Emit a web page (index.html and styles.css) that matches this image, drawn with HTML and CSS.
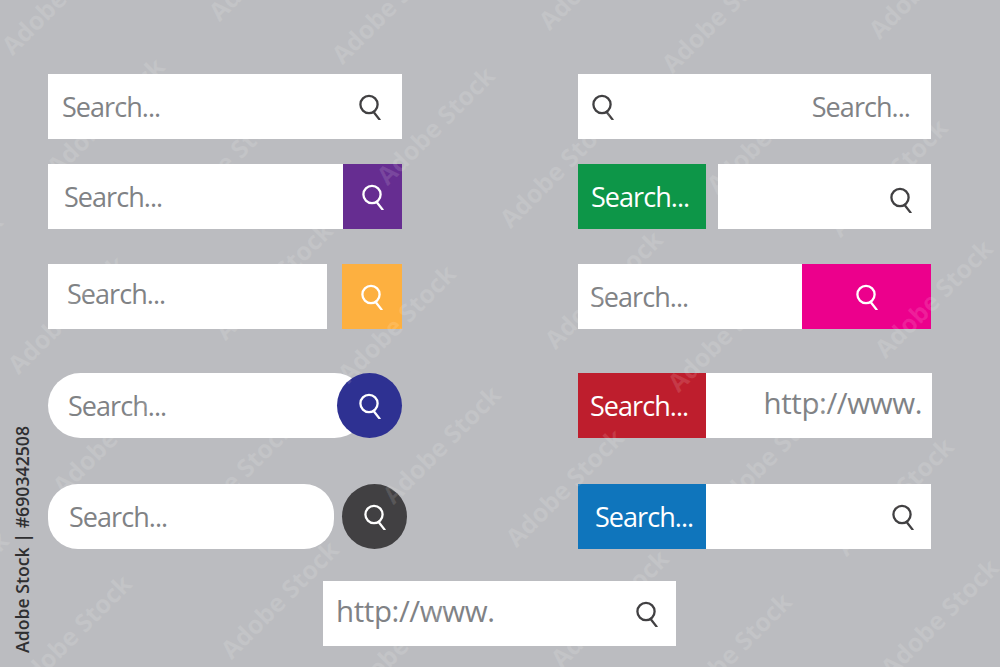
FILE: index.html
```html
<!DOCTYPE html>
<html lang="en">
<head>
<meta charset="utf-8">
<title>Search bars</title>
<link rel="stylesheet" href="styles.css">
</head>
<body>
<svg class="defs" width="0" height="0" aria-hidden="true">
  <symbol id="mag" viewBox="0 0 22 26">
    <circle cx="10" cy="10.5" r="8.6" fill="none" stroke="currentColor" stroke-width="2.3"/>
    <path d="M14.6 18 L20.6 25.6" fill="none" stroke="currentColor" stroke-width="2.3" stroke-linecap="round"/>
  </symbol>
</svg>
<main class="sheet">
  <div class="row row-1">
    <div class="col">
      <div class="bar">
        <span class="txt pl-14">Search...</span>
        <svg class="icon dark end pr-21"><use href="#mag"/></svg>
      </div>
    </div>
    <div class="col">
      <div class="bar">
        <svg class="icon dark ml-14"><use href="#mag"/></svg>
        <span class="txt end pr-21">Search...</span>
      </div>
    </div>
  </div>
  <div class="row row-2">
    <div class="col">
      <div class="bar grow">
        <span class="txt pl-16">Search...</span>
      </div>
      <div class="btn w-59 purple"><svg class="icon"><use href="#mag"/></svg></div>
    </div>
    <div class="col gap-12">
      <div class="btn w-128 green"><span class="txt light pl-13">Search...</span></div>
      <div class="bar grow">
        <svg class="icon dark end pr-19 down-3"><use href="#mag"/></svg>
      </div>
    </div>
  </div>
  <div class="row row-3">
    <div class="col gap-15">
      <div class="bar grow">
        <span class="txt pl-19 up-3">Search...</span>
      </div>
      <div class="btn w-60 orange"><svg class="icon"><use href="#mag"/></svg></div>
    </div>
    <div class="col">
      <div class="bar grow">
        <span class="txt pl-12">Search...</span>
      </div>
      <div class="btn w-129 pink"><svg class="icon"><use href="#mag"/></svg></div>
    </div>
  </div>
  <div class="row row-4">
    <div class="col">
      <div class="bar grow pill overlap">
        <span class="txt pl-20">Search...</span>
      </div>
      <div class="btn w-65 round navy"><svg class="icon"><use href="#mag"/></svg></div>
    </div>
    <div class="col wide">
      <div class="btn w-128 red"><span class="txt light pl-12">Search...</span></div>
      <div class="bar grow">
        <span class="txt url end pr-10 up-3">http://www.</span>
      </div>
    </div>
  </div>
  <div class="row row-5">
    <div class="col extended gap-8">
      <div class="bar grow pill">
        <span class="txt pl-21">Search...</span>
      </div>
      <div class="btn w-65 round graphite"><svg class="icon"><use href="#mag"/></svg></div>
    </div>
    <div class="col">
      <div class="btn w-128 blue"><span class="txt light pl-17">Search...</span></div>
      <div class="bar grow">
        <svg class="icon dark end pr-17"><use href="#mag"/></svg>
      </div>
    </div>
  </div>
  <div class="row row-6">
    <div class="col slim">
      <div class="bar">
        <span class="txt url pl-13 up-3">http://www.</span>
        <svg class="icon dark end pr-18"><use href="#mag"/></svg>
      </div>
    </div>
  </div>
</main>
<svg class="marks" viewBox="0 0 1000 667" aria-hidden="true">
  <g class="mark">
    <text transform="translate(274 -32) rotate(-45)">Adobe Stock</text>
    <text transform="translate(604 -23) rotate(-45)">Adobe Stock</text>
    <text transform="translate(934 -14) rotate(-45)">Adobe Stock</text>
    <text transform="translate(67 2) rotate(-45)">Adobe Stock</text>
    <text transform="translate(397 11) rotate(-45)">Adobe Stock</text>
    <text transform="translate(727 20) rotate(-45)">Adobe Stock</text>
    <text transform="translate(112 123) rotate(-45)">Adobe Stock</text>
    <text transform="translate(442 132) rotate(-45)">Adobe Stock</text>
    <text transform="translate(772 141) rotate(-45)">Adobe Stock</text>
    <text transform="translate(235 166) rotate(-45)">Adobe Stock</text>
    <text transform="translate(565 175) rotate(-45)">Adobe Stock</text>
    <text transform="translate(895 184) rotate(-45)">Adobe Stock</text>
    <text transform="translate(-50 278) rotate(-45)">Adobe Stock</text>
    <text transform="translate(280 287) rotate(-45)">Adobe Stock</text>
    <text transform="translate(610 296) rotate(-45)">Adobe Stock</text>
    <text transform="translate(940 305) rotate(-45)">Adobe Stock</text>
    <text transform="translate(73 321) rotate(-45)">Adobe Stock</text>
    <text transform="translate(403 330) rotate(-45)">Adobe Stock</text>
    <text transform="translate(733 339) rotate(-45)">Adobe Stock</text>
    <text transform="translate(118 442) rotate(-45)">Adobe Stock</text>
    <text transform="translate(448 451) rotate(-45)">Adobe Stock</text>
    <text transform="translate(778 460) rotate(-45)">Adobe Stock</text>
    <text transform="translate(241 485) rotate(-45)">Adobe Stock</text>
    <text transform="translate(571 494) rotate(-45)">Adobe Stock</text>
    <text transform="translate(901 503) rotate(-45)">Adobe Stock</text>
    <text transform="translate(-44 597) rotate(-45)">Adobe Stock</text>
    <text transform="translate(286 606) rotate(-45)">Adobe Stock</text>
    <text transform="translate(616 615) rotate(-45)">Adobe Stock</text>
    <text transform="translate(946 624) rotate(-45)">Adobe Stock</text>
    <text transform="translate(79 640) rotate(-45)">Adobe Stock</text>
    <text transform="translate(409 649) rotate(-45)">Adobe Stock</text>
    <text transform="translate(739 658) rotate(-45)">Adobe Stock</text>
  </g>
</svg>
<div class="stamp">Adobe Stock | #690342508</div>
</body>
</html>
```
FILE: styles.css
```css
* { box-sizing: border-box; }
html, body { margin: 0; height: 100%; }
body {
  position: relative;
  width: 1000px;
  height: 667px;
  overflow: hidden;
  background: #bbbcc0;
  font-family: "Open Sans", "Noto Sans", sans-serif;
}
.defs { display: block; height: 0; }
.sheet { padding: 74px 0 0 48px; display: flex; flex-direction: column; }
.row { display: flex; gap: 176px; height: 65px; }
.row-2 { margin-top: 25px; }
.row-3 { margin-top: 35px; }
.row-4 { margin-top: 44px; }
.row-5 { margin-top: 46px; }
.row-6 { margin-top: 32px; padding-left: 275px; }
.col { display: flex; width: 354px; height: 65px; flex: none; }
.col.wide { width: 354px; }
.col.slim { width: 353px; }
.col.extended { width: 359px; margin-right: -5px; }
.row-1 .col + .col, .row-2 .col + .col, .row-3 .col + .col, .row-5 .col + .col { width: 353px; }
.gap-12 { gap: 12px; }
.gap-15 { gap: 15px; }
.gap-8 { gap: 8px; }
.bar { display: flex; align-items: center; flex: 1 1 auto; min-width: 0; height: 65px; background: #fff; }
.grow { flex: 1 1 0; }
.pill { border-radius: 32.5px; }
.row-5 .pill { border-radius: 30px; }
.overlap { margin-right: -30px; }
.btn { display: flex; align-items: center; justify-content: center; flex: none; height: 65px; position: relative; }
.btn:has(.txt) { justify-content: flex-start; }
.w-59 { width: 59px; }
.w-60 { width: 60px; }
.w-65 { width: 65px; }
.w-128 { width: 128px; }
.w-129 { width: 129px; }
.round { border-radius: 50%; }
.purple { background: #662d91; }
.orange { background: #fdb040; }
.navy { background: #2e3192; }
.graphite { background: #414042; }
.green { background: #0d9648; }
.pink { background: #ec008c; }
.red { background: #be1e2d; }
.blue { background: #0f75bc; }
.txt {
  font-size: 27px;
  line-height: 34px;
  letter-spacing: -0.95px;
  color: #808285;
  white-space: nowrap;
}
.url { font-size: 29.5px; letter-spacing: -0.4px; }
.light { color: #fff; }
.icon { display: block; width: 22px; height: 26px; color: #fff; flex: none; }
.icon.dark { color: #414042; }
.end { margin-left: auto; }
.pl-12 { margin-left: 12px; }
.pl-13 { margin-left: 13px; }
.pl-14 { margin-left: 14px; }
.pl-16 { margin-left: 16px; }
.pl-17 { margin-left: 17px; }
.pl-19 { margin-left: 19px; }
.pl-20 { margin-left: 20px; }
.pl-21 { margin-left: 21px; }
.ml-14 { margin-left: 14px; }
.pr-10 { margin-right: 10px; }
.pr-17 { margin-right: 17px; }
.pr-18 { margin-right: 18px; }
.pr-19 { margin-right: 19px; }
.pr-21 { margin-right: 21px; }
.up-3 { margin-bottom: 6px; }
.down-3 { margin-top: 6px; }
.marks { position: absolute; inset: 0; width: 1000px; height: 667px; pointer-events: none; }
.mark text {
  font-family: "Open Sans", sans-serif;
  font-weight: 700;
  font-size: 25px;
  text-anchor: middle;
  fill: rgba(255, 255, 255, 0.12);
}
.stamp {
  position: absolute;
  left: 12px;
  top: 426px;
  height: 227px;
  writing-mode: vertical-rl;
  transform: rotate(180deg);
  font-family: "Open Sans", sans-serif;
  font-size: 17.7px;
  font-weight: 600;
  line-height: 20px;
  color: #2f2f31;
  white-space: nowrap;
}
```
